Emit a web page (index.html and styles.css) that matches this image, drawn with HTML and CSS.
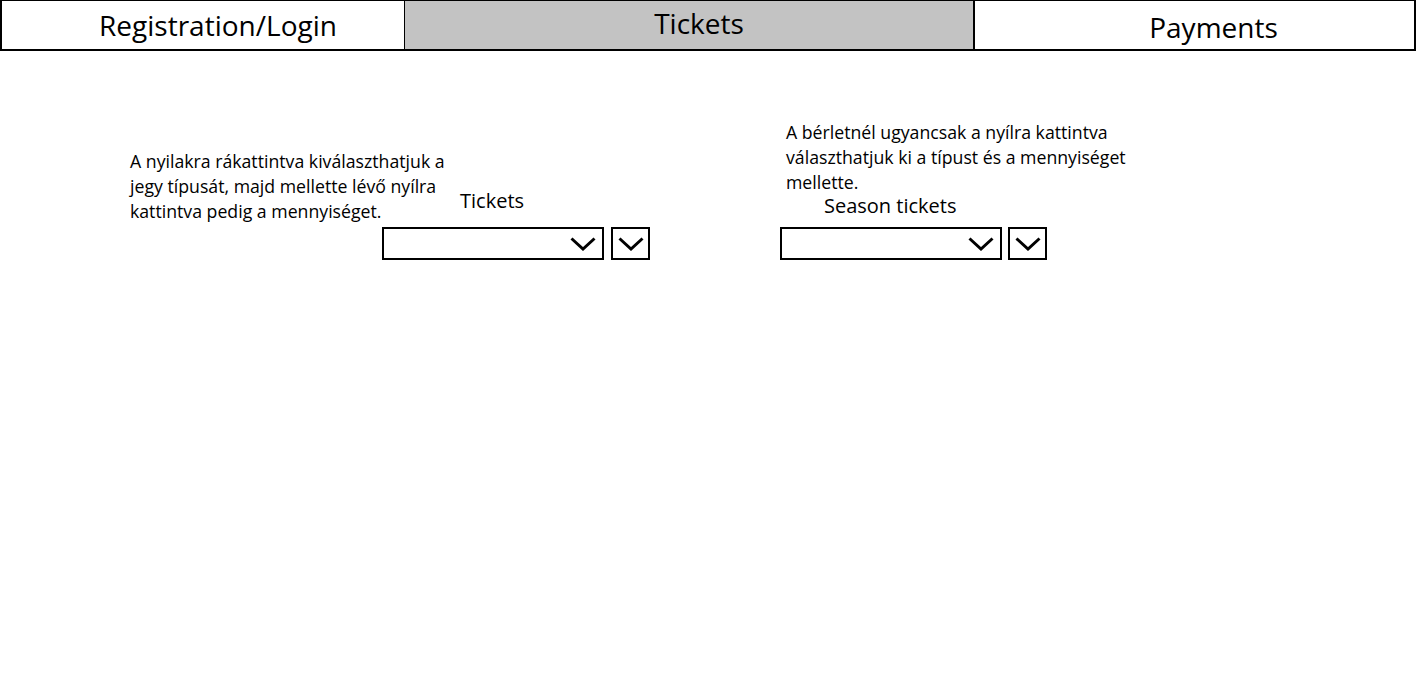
FILE: index.html
```html
<!DOCTYPE html>
<html lang="hu">
<head>
  <meta charset="UTF-8">
  <meta name="viewport" content="width=device-width, initial-scale=1.0">
  <title>Tickets</title>
  <link rel="stylesheet" href="styles.css">
</head>
<body>

  <nav class="tabs">
    <div class="tab tab-login">Registration/Login</div>
    <div class="tab tab-tickets active">Tickets</div>
    <div class="tab tab-payments">Payments</div>
  </nav>

  <main class="content">
    <section class="group group-tickets">
      <p class="note note-tickets">A nyilakra rákattintva kiválaszthatjuk a<br>jegy típusát, majd mellette lévő nyílra<br>kattintva pedig a mennyiséget.</p>
      <div class="label label-tickets">Tickets</div>
      <div class="controls">
        <div class="select">
          <svg class="chevron" width="26" height="14" viewBox="0 0 26 14"><polyline points="1.5,1.5 13,12 24.5,1.5" fill="none" stroke="#000" stroke-width="3"/></svg>
        </div>
        <div class="qty">
          <svg class="chevron" width="26" height="14" viewBox="0 0 26 14"><polyline points="1.5,1.5 13,12 24.5,1.5" fill="none" stroke="#000" stroke-width="3"/></svg>
        </div>
      </div>
    </section>

    <section class="group group-season">
      <p class="note note-season">A bérletnél ugyancsak a nyílra kattintva<br>választhatjuk ki a típust és a mennyiséget<br>mellette.</p>
      <div class="label label-season">Season tickets</div>
      <div class="controls controls-season">
        <div class="select">
          <svg class="chevron" width="26" height="14" viewBox="0 0 26 14"><polyline points="1.5,1.5 13,12 24.5,1.5" fill="none" stroke="#000" stroke-width="3"/></svg>
        </div>
        <div class="qty">
          <svg class="chevron" width="26" height="14" viewBox="0 0 26 14"><polyline points="1.5,1.5 13,12 24.5,1.5" fill="none" stroke="#000" stroke-width="3"/></svg>
        </div>
      </div>
    </section>
  </main>

</body>
</html>
```

FILE: styles.css
```css
body {
  font-family: "Open Sans", "Noto Sans", sans-serif;
  background-color: #fff;
  color: #000;
  margin: 0;
  padding: 0;
}

.tabs {
  display: flex;
  height: 51px;
  box-sizing: border-box;
  border: 2px solid #000;
  border-top-width: 1px;
}

.tab {
  display: flex;
  align-items: center;
  justify-content: center;
  font-size: 28px;
  box-sizing: border-box;
}

.tab-login {
  width: 402px;
  padding-left: 30px;
  padding-bottom: 1px;
}

.tab-tickets {
  width: 569px;
  border-left: 1px solid #000;
  padding-left: 20px;
  padding-bottom: 4px;
}

.tab-payments {
  flex: 1;
  border-left: 2px solid #000;
  padding-left: 38px;
  padding-top: 4px;
}

.active {
  background-color: #c3c3c3;
}

.content {
  display: flex;
  align-items: flex-end;
  gap: 130px;
  padding-top: 69px;
  padding-left: 130px;
}

.note {
  margin: 0;
  font-size: 17.7px;
  line-height: 25px;
  white-space: nowrap;
}

.label {
  font-size: 20px;
  line-height: 21px;
}

.group-tickets {
  display: grid;
  grid-template-columns: 252px auto;
  grid-template-rows: auto auto;
}

.note-tickets {
  grid-column: 1;
  grid-row: 1;
}

.label-tickets {
  grid-column: 2;
  grid-row: 1;
  align-self: end;
  padding-left: 78px;
  margin-bottom: 13px;
}

.group-tickets .controls {
  grid-column: 2;
  grid-row: 2;
  margin-top: 3px;
}

.group-season {
  display: flex;
  flex-direction: column;
}

.note-season {
  padding-left: 6px;
}

.label-season {
  padding-left: 44px;
  margin-bottom: 11px;
}

.controls {
  display: flex;
  gap: 7px;
}

.controls-season {
  gap: 6px;
}

.select {
  width: 222px;
  height: 33px;
  box-sizing: border-box;
  border: 2px solid #000;
  display: flex;
  align-items: center;
  justify-content: flex-end;
  padding-right: 6px;
}

.qty {
  width: 39px;
  height: 33px;
  box-sizing: border-box;
  border: 2px solid #000;
  display: flex;
  align-items: center;
  justify-content: center;
}

.chevron {
  display: block;
}
```
